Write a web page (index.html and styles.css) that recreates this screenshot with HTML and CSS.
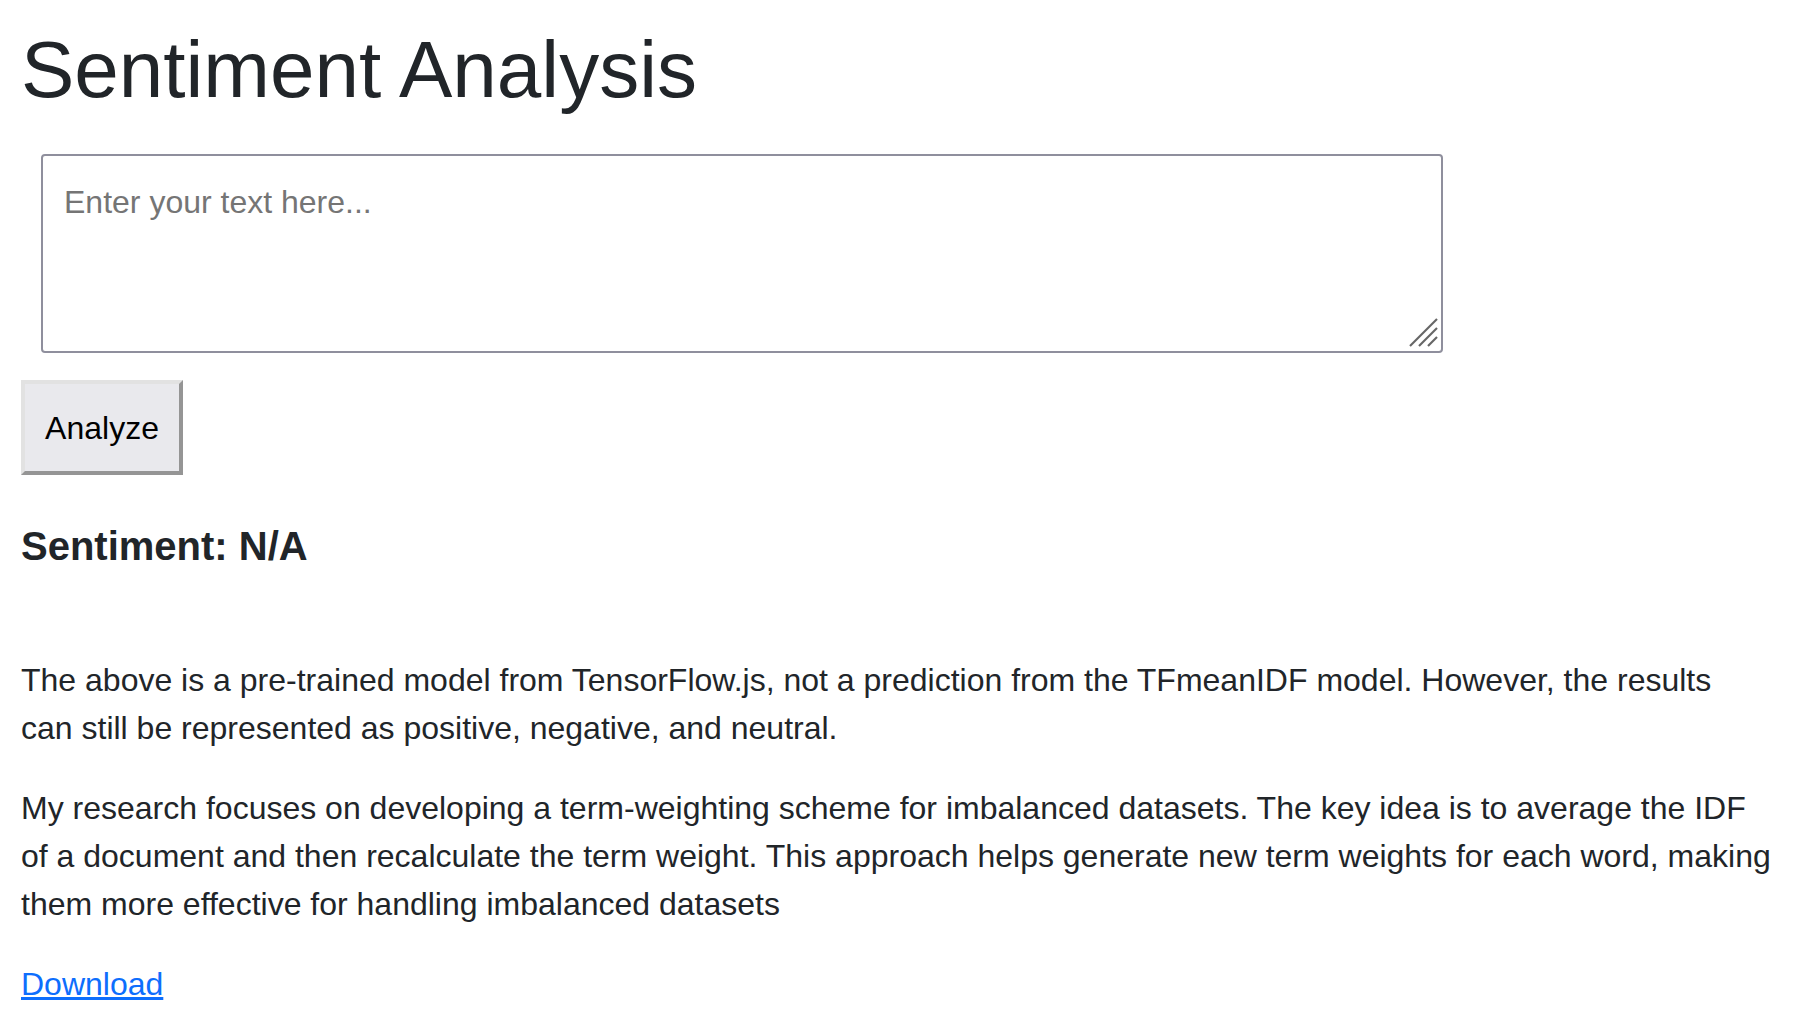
FILE: index.html
```html
<!DOCTYPE html>
<html lang="en">
<head>
<meta charset="utf-8">
<title>Sentiment Analysis</title>
<link rel="stylesheet" href="styles.css">
</head>
<body>
<main class="page">
  <h1 class="title">Sentiment Analysis</h1>
  <div class="input-wrap">
    <textarea class="text-input" placeholder="Enter your text here..."></textarea>
    <svg class="grip" width="30" height="30" viewBox="0 0 30 30" aria-hidden="true">
      <line x1="29" y1="1" x2="2" y2="28" />
      <line x1="29" y1="10" x2="11" y2="28" />
      <line x1="29" y1="19" x2="20" y2="28" />
    </svg>
  </div>
  <button class="analyze-btn" type="button">Analyze</button>
  <h5 class="result">Sentiment: N/A</h5>
  <p class="note">The above is a pre-trained model from TensorFlow.js, not a prediction from the TFmeanIDF model. However, the results can still be represented as positive, negative, and neutral.</p>
  <p class="note">My research focuses on developing a term-weighting scheme for imbalanced datasets. The key idea is to average the IDF of a document and then recalculate the term weight. This approach helps generate new term weights for each word, making them more effective for handling imbalanced datasets</p>
  <a class="download" href="#">Download</a>
</main>
</body>
</html>
```
FILE: styles.css
```css
html, body {
  margin: 0;
  padding: 0;
  background: #ffffff;
}

body {
  font-family: "Liberation Sans", Arial, sans-serif;
  color: #212529;
  font-size: 32px;
  line-height: 48px;
}

.page {
  padding: 22px 38px 0 21px;
}

.title {
  margin: 0;
  font-size: 80px;
  font-weight: 400;
  line-height: 96px;
}

.input-wrap {
  position: relative;
  width: 1402px;
  height: 199px;
  margin: 36px 0 27px 20px;
}

.text-input {
  display: block;
  box-sizing: border-box;
  width: 100%;
  height: 100%;
  margin: 0;
  padding: 22px 20px 20px 21px;
  border: 2px solid #8f8f9d;
  border-radius: 4px;
  font-family: "Liberation Sans", Arial, sans-serif;
  font-size: 32px;
  line-height: 1.5;
  color: #212529;
  background: #ffffff;
  resize: none;
  outline: none;
}

.text-input::placeholder {
  color: #757575;
  opacity: 1;
}

.grip {
  position: absolute;
  right: 5px;
  bottom: 5px;
  stroke: #666666;
  stroke-width: 2.2;
}

.analyze-btn {
  display: block;
  box-sizing: border-box;
  width: 162px;
  height: 95px;
  margin: 0;
  padding: 0 20px;
  border-width: 4px;
  border-style: solid;
  border-color: #e2e2e2 #959595 #959595 #e2e2e2;
  background: #e9e9ed;
  font-family: "Liberation Sans", Arial, sans-serif;
  font-size: 32px;
  line-height: 48px;
  color: #000000;
}

.result {
  margin: 47px 0 86px;
  font-size: 40px;
  font-weight: 700;
  line-height: 48px;
}

.note {
  margin: 0 0 32px;
}

.download {
  color: #0d6efd;
  text-decoration: underline;
}
```
